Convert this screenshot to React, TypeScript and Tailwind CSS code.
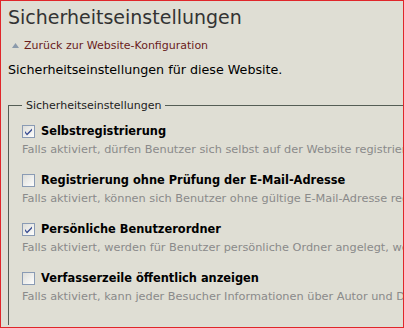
import React from "react";

const Box = ({ checked }: { checked: boolean }) => (
  <svg width="13" height="13" viewBox="0 0 13 13" className="shrink-0">
    <defs>
      <linearGradient id="cbg" x1="0" y1="0" x2="1" y2="1">
        <stop offset="0" stopColor="#dcdcd7" />
        <stop offset="1" stopColor="#ffffff" />
      </linearGradient>
    </defs>
    <rect x="0.5" y="0.5" width="12" height="12" fill="url(#cbg)" stroke="#8a9bb4" />
    {checked && (
      <path d="M3 6 L5 8.5 L10 3.5 L10 5.5 L5 10.5 L3 8 Z" fill="#3c4f93" />
    )}
  </svg>
);

const items = [
  { label: "Selbstregistrierung", checked: true, desc: "Falls aktiviert, dürfen Benutzer sich selbst auf der Website registrieren." },
  { label: "Registrierung ohne Prüfung der E-Mail-Adresse", checked: false, desc: "Falls aktiviert, können sich Benutzer ohne gültige E-Mail-Adresse registrieren." },
  { label: "Persönliche Benutzerordner", checked: true, desc: "Falls aktiviert, werden für Benutzer persönliche Ordner angelegt, wenn sie sich anmelden." },
  { label: "Verfasserzeile öffentlich anzeigen", checked: false, desc: "Falls aktiviert, kann jeder Besucher Informationen über Autor und Datum sehen." },
];

export default function App() {
  return (
    <div className="w-[404px] h-[328px] overflow-hidden bg-[#dfded4] border border-[#e0262a] font-['DejaVu_Sans',sans-serif] text-[#222]">
      <div className="pl-[7px] pt-[4px]">
        <h1 className="text-[19px] leading-[24px] text-[#333] whitespace-nowrap">Sicherheitseinstellungen</h1>
        <div className="flex items-center mt-[10px] pl-[4px] gap-[5px]">
          <svg width="7" height="5" viewBox="0 0 7 5"><path d="M3.5 0 L7 5 L0 5 Z" fill="#8b9aab" /></svg>
          <span className="text-[11px] leading-[13px] text-[#6a1c1c] whitespace-nowrap">Zurück zur Website-Konfiguration</span>
        </div>
        <p className="mt-[10px] text-[12.7px] leading-[16px] text-black whitespace-nowrap">Sicherheitseinstellungen für diese Website.</p>
        <fieldset className="mt-[21px] border-l border-t border-[#555e55] pl-[13px] pb-[20px] min-w-0 w-[420px]">
          <legend className="px-[4px] text-[11px] leading-[13px] text-[#222]">Sicherheitseinstellungen</legend>
          <div className="flex flex-col gap-[15px] mt-[12px]">
            {items.map((it) => (
              <div key={it.label} className="flex flex-col">
                <div className="flex items-center gap-[6px]">
                  <Box checked={it.checked} />
                  <span className="font-bold text-[11.4px] leading-[14px] text-black whitespace-nowrap">{it.label}</span>
                </div>
                <div className="mt-[4px] text-[11.3px] leading-[16px] text-[#8a8a8a] whitespace-nowrap">{it.desc}</div>
              </div>
            ))}
          </div>
        </fieldset>
      </div>
    </div>
  );
}
